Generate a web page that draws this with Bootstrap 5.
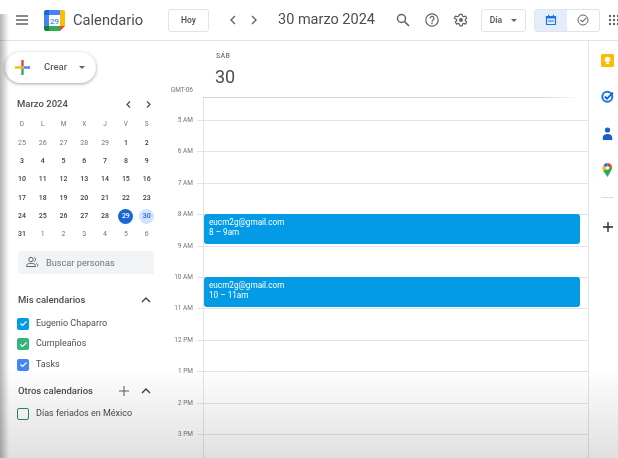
<!DOCTYPE html>
<html lang="es">
<head>
<meta charset="utf-8">
<title>Calendario</title>
<link rel="stylesheet" href="https://cdn.jsdelivr.net/npm/bootstrap@5.3.0/dist/css/bootstrap.min.css">
<style>
html,body{height:100%;}
body{width:618px;height:458px;overflow:hidden;font-family:Roboto,"Liberation Sans",sans-serif;color:#3c4043;background:#fff;}
.shell{position:relative;width:618px;height:458px;overflow:hidden;}
.fade-bottom{position:absolute;left:0;right:0;bottom:0;height:92px;background:linear-gradient(to bottom,#fff,#e0e0e0);mix-blend-mode:multiply;pointer-events:none;z-index:5;}
.fade-left{position:absolute;left:0;top:14px;bottom:0;width:9px;background:linear-gradient(to right,#b5b5b5,#fff);mix-blend-mode:multiply;pointer-events:none;z-index:5;}
.topbar{height:41px;border-bottom:1px solid #e3e4e6;padding-left:14px;width:640px;}
.topbar>*{flex:none;}
.burger{width:16px;height:16px;}
.logo{width:21px;height:21px;margin-left:14px;}
.brand{font-size:14.7px;margin-left:8px;width:95px;color:#4a4d51;}
.tb-btn{height:23px;border:1px solid #e1e3e5;border-radius:3px;background:#fff;font-size:8.5px;font-weight:500;color:#4a4d51;padding:0;display:flex;align-items:center;justify-content:center;}
.hoy{width:41px;}
.chev-wrap{margin-left:18px;width:33px;}
.tb-date{font-size:14.5px;margin-left:18px;width:110px;white-space:nowrap;color:#4a4d51;}
.tool-ic{width:29px;}
.dia{width:45px;margin-left:6px;gap:9px;}
.caret-x{width:0;height:0;border-left:3px solid transparent;border-right:3px solid transparent;border-top:3px solid #5f6368;}
.toggle{margin-left:8px;width:66px;height:23px;border:1px solid #e1e3e5;border-radius:3px;overflow:hidden;}
.toggle>div{flex:1;}
.tog-on{background:#e4edfa;}
.apps{margin-left:8px;}
.body-row{height:417px;}
.side{width:168px;flex:none;padding-left:5px;}
.crear{width:91px;height:31px;border-radius:16px;background:#fff;box-shadow:0 1px 3px rgba(60,64,67,.35),0 1px 4px rgba(60,64,67,.15);margin-top:11px;padding-left:10px;font-size:9.5px;font-weight:500;color:#5a5d61;}
.crear .lbl{margin-left:14px;width:35px;}
.mini{margin:13px 0 0 12px;width:136px;}
.mini-head{font-size:9.5px;font-weight:500;color:#4a4d51;height:16px;}
.mini-nav{gap:11px;}
.mini-grid{display:grid;grid-template-columns:repeat(7,20.8px);grid-auto-rows:18.35px;margin-left:-5.5px;margin-top:3.5px;}
.mini-grid span{display:flex;align-items:center;justify-content:center;font-size:7px;font-weight:500;color:#3c4043;}
.mini-grid .wd{font-size:6.5px;font-weight:400;color:#70757a;}
.mini-grid .ot{color:#70757a;font-weight:400;}
.d-today,.d-sel{width:15px;height:15px;border-radius:50%;margin:auto;}
.mini-grid .d-today{background:#1a66d4;color:#fff;}
.mini-grid .d-sel{background:#d2e3fc;color:#1a66d4;}
.people{width:136px;height:23px;background:#f1f3f4;border-radius:2px;margin:7px 0 0 13px;padding-left:7px;gap:7px;font-size:9.2px;color:#70757a;}
.sec{margin:19.5px 0 0 13px;width:134px;font-size:9.5px;font-weight:500;color:#4a4d51;height:14px;}
.sec.s2{margin-top:9px;}
.plus-gap{margin-right:10px;}
.cal-item{margin:0 0 0 12px;height:20.5px;gap:7px;font-size:9px;color:#4a4d51;}
.cal-list{margin-top:6px;}
.cb{width:12px;height:12px;border-radius:2px;display:flex;align-items:center;justify-content:center;flex:none;}
.cb-a{background:#039be5;}
.cb-b{background:#33b679;}
.cb-c{background:#4285f4;}
.cb-d{border:1.5px solid #2e8b63;}
.main-col{width:421px;flex:none;border-right:1px solid #e3e4e6;}
.day-head{height:56px;}
.head-gutter{width:35px;flex:none;font-size:6.5px;color:#70757a;text-align:right;padding-right:10px;padding-top:45px;white-space:nowrap;}
.day-col{flex:1;padding-left:12px;}
.sab{font-size:7px;color:#70757a;font-weight:500;margin-top:11px;line-height:9px;padding-left:1px;letter-spacing:.3px;}
.num{font-size:18px;line-height:22px;margin-top:5px;color:#4a4d51;}
.all-rule{height:1px;margin-left:35px;margin-right:8px;background:linear-gradient(to right,#d5d7d9 90%,rgba(213,215,217,0));}
.hr-row{display:flex;height:31.4px;}
.hr-row.first{height:22px;}
.hr-lbl{width:35px;flex:none;font-size:6.5px;color:#70757a;text-align:right;padding-right:10px;white-space:nowrap;}
.hr-lbl b{font-weight:400;display:block;line-height:8px;margin-top:-4px;}
.hr-cell{flex:1;border-left:1px solid #e3e4e6;border-top:1px solid #e3e4e6;position:relative;}
.hr-row.first .hr-cell{border-top:0;}
.hr-tick{position:absolute;left:-7px;top:-1px;width:7px;height:1px;background:#e3e4e6;}
.evt{position:absolute;left:0;top:-1px;width:376px;height:30px;background:#039be5;border-radius:3px;color:#fff;font-size:8.2px;line-height:10px;padding:3px 5px;z-index:2;}
.rail{flex:1;padding-top:1px;padding-left:8px;}
.rail>div{height:36.5px;}
.rail>.rail-mid{height:19px;}
.rail>.rail-end{height:40px;}
.rail-sep{width:13px;height:1px;background:#dadce0;}
</style>
</head>
<body>
<div class="shell">
  <header class="topbar d-flex align-items-center">
    <svg class="burger" viewBox="0 0 16 16"><path d="M2 4h12M2 8h12M2 12h12" stroke="#5f6368" stroke-width="1.4" fill="none"/></svg>
    <svg class="logo" viewBox="0 0 21 21">
      <rect x="0" y="0" width="21" height="21" rx="2" fill="#fff"/>
      <path d="M5 0h11v5H5z" fill="#4285f4"/>
      <path d="M2 0h3v5H0V2a2 2 0 0 1 2-2z" fill="#1a66d4"/>
      <path d="M0 5h5v11H0z" fill="#4285f4"/>
      <path d="M16 0h3a2 2 0 0 1 2 2v3h-5z" fill="#fbbc04"/>
      <path d="M16 5h5v11h-5z" fill="#fbbc04"/>
      <path d="M5 16h11v5H5z" fill="#34a853"/>
      <path d="M0 16h5v5H2a2 2 0 0 1-2-2z" fill="#188038"/>
      <path d="M16 16h5l-5 5z" fill="#ea4335"/>
      <text x="10.5" y="13.6" font-size="8" font-family="Roboto,sans-serif" font-weight="500" text-anchor="middle" fill="#4285f4">29</text>
    </svg>
    <span class="brand">Calendario</span>
    <button class="tb-btn hoy">Hoy</button>
    <div class="chev-wrap d-flex justify-content-between align-items-center">
      <svg width="12" height="12" viewBox="0 0 12 12"><path d="M8 2 4 6l4 4" stroke="#5f6368" stroke-width="1.4" fill="none"/></svg>
      <svg width="12" height="12" viewBox="0 0 12 12"><path d="m4 2 4 4-4 4" stroke="#5f6368" stroke-width="1.4" fill="none"/></svg>
    </div>
    <span class="tb-date">30 marzo 2024</span>
    <div class="tool-ic d-flex justify-content-center">
      <svg width="16" height="16" viewBox="0 0 16 16"><circle cx="6.5" cy="6.5" r="4" stroke="#5f6368" stroke-width="1.5" fill="none"/><path d="m9.5 9.5 4.5 4.5" stroke="#5f6368" stroke-width="1.7"/></svg>
    </div>
    <div class="tool-ic d-flex justify-content-center">
      <svg width="16" height="16" viewBox="0 0 16 16"><circle cx="8" cy="8" r="6.2" stroke="#5f6368" stroke-width="1.2" fill="none"/><path d="M6 6.4a2 2 0 1 1 3.1 1.6c-.7.5-1.1.8-1.1 1.7" stroke="#5f6368" stroke-width="1.2" fill="none"/><circle cx="8" cy="11.4" r=".8" fill="#5f6368"/></svg>
    </div>
    <div class="tool-ic d-flex justify-content-center">
      <svg width="16" height="16" viewBox="0 0 16 16"><path d="M6.800 1.500h2.400l.4 1.900 1.100.6 1.800-.7 1.200 2.100-1.400 1.300v1.200l1.400 1.300-1.200 2.100-1.800-.7-1.100.6-.4 1.900H6.800l-.4-1.900-1.100-.6-1.800.7-1.200-2.100 1.400-1.300V6.700L1.300 5.400l1.200-2.100 1.800.7 1.100-.6z" stroke="#5f6368" stroke-width="1.2" fill="none" stroke-linejoin="round" transform="translate(0 .8)"/><circle cx="8" cy="8" r="2" fill="#5f6368"/></svg>
    </div>
    <button class="tb-btn dia">Día<i class="caret-x"></i></button>
    <div class="toggle d-flex">
      <div class="tog-on d-flex align-items-center justify-content-center">
        <svg width="12" height="12" viewBox="0 0 12 12"><path d="M1.500 2.500h9v8h-9z" fill="none" stroke="#1a73e8" stroke-width="1.2"/><path d="M1.500 2h9v2.500h-9zM3 .7h1.200V2H3zM7.800.7H9V2H7.800z" fill="#1a73e8"/><path d="M3 6.500h6v1H3z" fill="#1a73e8"/></svg>
      </div>
      <div class="d-flex align-items-center justify-content-center">
        <svg width="12" height="12" viewBox="0 0 12 12"><circle cx="6" cy="6" r="5" fill="none" stroke="#5f6368" stroke-width="1"/><path d="m3.500 6 1.800 1.800 4-4" fill="none" stroke="#5f6368" stroke-width="1.1"/></svg>
      </div>
    </div>
    <svg class="apps" width="12" height="14" viewBox="0 0 12 14"><g fill="#5f6368"><circle cx="2" cy="3" r="1.200"/><circle cx="6" cy="3" r="1.200"/><circle cx="10" cy="3" r="1.200"/><circle cx="2" cy="7" r="1.200"/><circle cx="6" cy="7" r="1.200"/><circle cx="10" cy="7" r="1.200"/><circle cx="2" cy="11" r="1.200"/><circle cx="6" cy="11" r="1.200"/><circle cx="10" cy="11" r="1.200"/></g></svg>
  </header>

  <div class="body-row d-flex">
    <aside class="side">
      <div class="crear d-flex align-items-center">
        <svg width="15" height="15" viewBox="0 0 15 15"><path d="M6.300 0h2.400v6.300H6.300z" fill="#ea4335"/><path d="M8.700 6.300H15v2.400H8.700z" fill="#4285f4"/><path d="M6.300 8.700h2.400V15H6.300z" fill="#34a853"/><path d="M0 6.300h6.300v2.400H0z" fill="#fbbc04"/><path d="M6.300 6.300h2.400v2.400H6.300z" fill="#c9a32c"/></svg>
        <span class="lbl">Crear</span>
        <i class="caret-x"></i>
      </div>
      <div class="mini">
        <div class="mini-head d-flex justify-content-between align-items-center">
          <span>Marzo 2024</span>
          <div class="mini-nav d-flex">
            <svg width="9" height="9" viewBox="0 0 9 9"><path d="M6 1.500 3 4.500l3 3" stroke="#4a4d51" stroke-width="1.2" fill="none"/></svg>
            <svg width="9" height="9" viewBox="0 0 9 9"><path d="m3 1.500 3 3-3 3" stroke="#4a4d51" stroke-width="1.2" fill="none"/></svg>
          </div>
        </div>
        <div class="mini-grid">
          <span class="wd">D</span><span class="wd">L</span><span class="wd">M</span><span class="wd">X</span><span class="wd">J</span><span class="wd">V</span><span class="wd">S</span>
          <span class="ot">25</span><span class="ot">26</span><span class="ot">27</span><span class="ot">28</span><span class="ot">29</span><span>1</span><span>2</span>
          <span>3</span><span>4</span><span>5</span><span>6</span><span>7</span><span>8</span><span>9</span>
          <span>10</span><span>11</span><span>12</span><span>13</span><span>14</span><span>15</span><span>16</span>
          <span>17</span><span>18</span><span>19</span><span>20</span><span>21</span><span>22</span><span>23</span>
          <span>24</span><span>25</span><span>26</span><span>27</span><span>28</span><span class="d-today">29</span><span class="d-sel">30</span>
          <span>31</span><span class="ot">1</span><span class="ot">2</span><span class="ot">3</span><span class="ot">4</span><span class="ot">5</span><span class="ot">6</span>
        </div>
      </div>
      <div class="people d-flex align-items-center">
        <svg width="14" height="12" viewBox="0 0 14 12"><circle cx="6" cy="3.500" r="2.200" fill="none" stroke="#5f6368" stroke-width="1"/><path d="M1.500 10.500V9.500c0-1.400 2.500-2.200 4.500-2.200s4.500.8 4.500 2.200v1z" fill="none" stroke="#5f6368" stroke-width="1"/><path d="M9.300 1.500a2.200 2.200 0 0 1 0 4M11 7.500c1 .4 1.800 1 1.800 2v1" fill="none" stroke="#5f6368" stroke-width="1"/></svg>
        <span>Buscar personas</span>
      </div>
      <div class="sec d-flex justify-content-between align-items-center">
        <span>Mis calendarios</span>
        <svg width="12" height="8" viewBox="0 0 12 8"><path d="m2 6 4-4 4 4" stroke="#3c4043" stroke-width="1.4" fill="none"/></svg>
      </div>
      <div class="cal-list">
        <div class="cal-item d-flex align-items-center"><span class="cb cb-a"><svg width="9" height="9" viewBox="0 0 9 9"><path d="m1.500 4.500 2 2 4-4" stroke="#fff" stroke-width="1.2" fill="none"/></svg></span><span>Eugenio Chaparro</span></div>
        <div class="cal-item d-flex align-items-center"><span class="cb cb-b"><svg width="9" height="9" viewBox="0 0 9 9"><path d="m1.500 4.500 2 2 4-4" stroke="#fff" stroke-width="1.2" fill="none"/></svg></span><span>Cumpleaños</span></div>
        <div class="cal-item d-flex align-items-center"><span class="cb cb-c"><svg width="9" height="9" viewBox="0 0 9 9"><path d="m1.500 4.500 2 2 4-4" stroke="#fff" stroke-width="1.2" fill="none"/></svg></span><span>Tasks</span></div>
      </div>
      <div class="sec s2 d-flex align-items-center">
        <span class="flex-grow-1">Otros calendarios</span>
        <svg class="plus-gap" width="12" height="12" viewBox="0 0 12 12"><path d="M6 1v10M1 6h10" stroke="#5f6368" stroke-width="1.1"/></svg>
        <svg width="12" height="8" viewBox="0 0 12 8"><path d="m2 6 4-4 4 4" stroke="#3c4043" stroke-width="1.4" fill="none"/></svg>
      </div>
      <div class="cal-list">
        <div class="cal-item d-flex align-items-center"><span class="cb cb-d"></span><span>Días feriados en México</span></div>
      </div>
    </aside>

    <main class="main-col">
      <div class="d-flex day-head">
        <div class="head-gutter">GMT-06</div>
        <div class="day-col">
          <div class="sab">SÁB</div>
          <div class="num">30</div>
        </div>
      </div>
      <div class="all-rule"></div>
      <div class="hr-row first"><div class="hr-lbl"></div><div class="hr-cell"></div></div>
      <div class="hr-row"><div class="hr-lbl"><b>5 AM</b></div><div class="hr-cell"><i class="hr-tick"></i></div></div>
      <div class="hr-row"><div class="hr-lbl"><b>6 AM</b></div><div class="hr-cell"><i class="hr-tick"></i></div></div>
      <div class="hr-row"><div class="hr-lbl"><b>7 AM</b></div><div class="hr-cell"><i class="hr-tick"></i></div></div>
      <div class="hr-row"><div class="hr-lbl"><b>8 AM</b></div><div class="hr-cell"><i class="hr-tick"></i><div class="evt">eucm2g@gmail.com<br>8 – 9am</div></div></div>
      <div class="hr-row"><div class="hr-lbl"><b>9 AM</b></div><div class="hr-cell"><i class="hr-tick"></i></div></div>
      <div class="hr-row"><div class="hr-lbl"><b>10 AM</b></div><div class="hr-cell"><i class="hr-tick"></i><div class="evt">eucm2g@gmail.com<br>10 – 11am</div></div></div>
      <div class="hr-row"><div class="hr-lbl"><b>11 AM</b></div><div class="hr-cell"><i class="hr-tick"></i></div></div>
      <div class="hr-row"><div class="hr-lbl"><b>12 PM</b></div><div class="hr-cell"><i class="hr-tick"></i></div></div>
      <div class="hr-row"><div class="hr-lbl"><b>1 PM</b></div><div class="hr-cell"><i class="hr-tick"></i></div></div>
      <div class="hr-row"><div class="hr-lbl"><b>2 PM</b></div><div class="hr-cell"><i class="hr-tick"></i></div></div>
      <div class="hr-row"><div class="hr-lbl"><b>3 PM</b></div><div class="hr-cell"><i class="hr-tick"></i></div></div>
    </main>

    <nav class="rail d-flex flex-column align-items-center">
      <div class="d-flex align-items-center">
        <svg width="13" height="13" viewBox="0 0 13 13"><rect width="13" height="13" rx="1.500" fill="#fbbc04"/><circle cx="6.500" cy="5.500" r="2.800" fill="#fff"/><rect x="5" y="8.500" width="3" height="1.500" fill="#fff"/></svg>
      </div>
      <div class="d-flex align-items-center">
        <svg width="13" height="13" viewBox="0 0 13 13"><circle cx="6.300" cy="6.700" r="5" fill="none" stroke="#1a73e8" stroke-width="2"/><path d="m3.800 6.500 2.200 2.200 6-6" fill="none" stroke="#1a5fc4" stroke-width="1.800"/></svg>
      </div>
      <div class="d-flex align-items-center">
        <svg width="11" height="13" viewBox="0 0 11 13"><circle cx="5.500" cy="3" r="2.600" fill="#1a5fc4"/><path d="M.8 13v-2.500C.8 8 3.500 7 5.500 7s4.700 1 4.700 3.500V13z" fill="#1a5fc4"/></svg>
      </div>
      <div class="d-flex align-items-center">
        <svg width="11" height="14" viewBox="0 0 11 14"><path d="M5.500 0A5 5 0 0 1 10 3L5.500 6z" fill="#ea4335"/><path d="M5.500 0A5 5 0 0 0 1.500 2L5.500 6z" fill="#1a73e8"/><path d="M1.500 2A5 5 0 0 0 1 7.500L5.500 6z" fill="#fbbc04"/><path d="M10 3a5 5 0 0 1-.6 4.200L5.500 14 1 7.500 5.500 6z" fill="#34a853"/><circle cx="5.500" cy="5" r="1.800" fill="#fff"/></svg>
      </div>
      <div class="rail-mid d-flex align-items-center"><i class="rail-sep"></i></div>
      <div class="rail-end d-flex align-items-center">
        <svg width="12" height="12" viewBox="0 0 12 12"><path d="M6 1v10M1 6h10" stroke="#202124" stroke-width="1.300"/></svg>
      </div>
    </nav>
  </div>
  <div class="fade-bottom"></div>
  <div class="fade-left"></div>
</div>
</body>
</html>
